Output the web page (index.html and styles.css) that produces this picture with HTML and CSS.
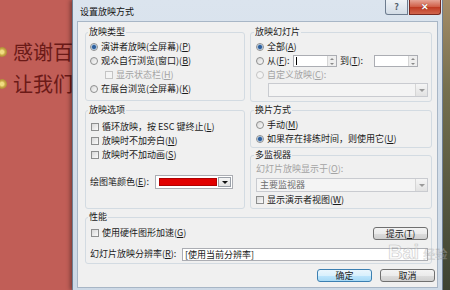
FILE: index.html
```html
<!DOCTYPE html>
<html lang="zh-CN">
<head>
  <meta charset="UTF-8">
  <meta name="viewport" content="width=device-width, initial-scale=1.0">
  <title>设置放映方式</title>
  <link rel="stylesheet" href="styles.css">
</head>
<body>
  <div class="desktop">
    <div class="slide">
      <p class="bullet-line"><span class="bullet"></span>感谢百</p>
      <p class="bullet-line"><span class="bullet"></span>让我们</p>
    </div>

    <div class="window">
      <div class="titlebar">
        <span class="title">设置放映方式</span>
        <div class="caption-buttons">
          <span class="cap-btn help">?</span>
          <span class="cap-btn close">✕</span>
        </div>
      </div>

      <div class="client">
        <div class="columns">
          <div class="col">
            <fieldset class="group">
              <legend>放映类型</legend>
              <label class="row"><input type="radio" name="type" checked>演讲者放映(全屏幕)(<u>P</u>)</label>
              <label class="row"><input type="radio" name="type">观众自行浏览(窗口)(<u>B</u>)</label>
              <label class="row disabled indent"><input type="checkbox" disabled>显示状态栏(<u>H</u>)</label>
              <label class="row"><input type="radio" name="type">在展台浏览(全屏幕)(<u>K</u>)</label>
            </fieldset>

            <fieldset class="group grow options">
              <legend>放映选项</legend>
              <label class="row"><input type="checkbox">循环放映，按 ESC 键终止(<u>L</u>)</label>
              <label class="row"><input type="checkbox">放映时不加旁白(<u>N</u>)</label>
              <label class="row"><input type="checkbox">放映时不加动画(<u>S</u>)</label>
              <div class="row pen-row">
                <span class="pen-label">绘图笔颜色(<u>E</u>):</span>
                <div class="combo color-combo">
                  <span class="swatch"></span>
                  <span class="combo-arrow dark"><span class="tri"></span></span>
                </div>
              </div>
            </fieldset>
          </div>

          <div class="col">
            <fieldset class="group right">
              <legend>放映幻灯片</legend>
              <label class="row"><input type="radio" name="range" checked>全部(<u>A</u>)</label>
              <div class="row">
                <label class="from-label"><input type="radio" name="range">从(<u>F</u>):</label>
                <div class="spin">
                  <span class="spin-text"><span class="caret"></span></span>
                  <span class="spin-btns"><span class="up"></span><span class="down"></span></span>
                </div>
                <span class="to-label">到(<u>T</u>):</span>
                <div class="spin">
                  <span class="spin-text"></span>
                  <span class="spin-btns"><span class="up"></span><span class="down"></span></span>
                </div>
              </div>
              <label class="row disabled"><input type="radio" name="range" disabled>自定义放映(<u>C</u>):</label>
              <div class="combo disabled-combo custom-combo">
                <span class="combo-text"></span>
                <span class="combo-arrow"><span class="tri"></span></span>
              </div>
            </fieldset>

            <fieldset class="group right advance">
              <legend>换片方式</legend>
              <label class="row"><input type="radio" name="advance">手动(<u>M</u>)</label>
              <label class="row"><input type="radio" name="advance" checked>如果存在排练时间，则使用它(<u>U</u>)</label>
            </fieldset>

            <fieldset class="group right grow monitors">
              <legend>多监视器</legend>
              <div class="line disabled">幻灯片放映显示于(<u>O</u>):</div>
              <div class="combo disabled-combo monitor-combo">
                <span class="combo-text">主要监视器</span>
                <span class="combo-arrow"><span class="tri"></span></span>
              </div>
              <label class="row presenter"><input type="checkbox">显示演示者视图(<u>W</u>)</label>
            </fieldset>
          </div>
        </div>

        <fieldset class="group perf">
          <legend>性能</legend>
          <div class="row perf-row">
            <label class="row"><input type="checkbox">使用硬件图形加速(<u>G</u>)</label>
            <button class="btn">提示(<u>T</u>)</button>
          </div>
          <div class="row res-row">
            <span class="res-label">幻灯片放映分辨率(<u>R</u>):</span>
            <input class="text-input" type="text" value="[使用当前分辨率]">
          </div>
        </fieldset>

        <div class="actions">
          <button class="btn default">确定</button>
          <button class="btn">取消</button>
        </div>
      </div>
    </div>

    <div class="backdrop"></div>

    <!-- site watermark lying over the screenshot -->
    <div class="watermark"><span class="wm-word">Bai</span><span class="wm-cn">经验</span></div>
  </div>
</body>
</html>
```

FILE: styles.css
```css
* {
  box-sizing: border-box;
}

body {
  margin: 0;
  width: 450px;
  height: 290px;
  overflow: hidden;
  font-family: "Noto Sans CJK SC", "Noto Sans", sans-serif;
  font-size: 9px;
  line-height: 12px;
  color: #1a1a1a;
}

.desktop {
  position: relative;
  display: flex;
  height: 290px;
}

/* slide behind the dialog */
.slide {
  width: 72px;
  flex: none;
  background: #c15e57;
  padding-top: 40px;
  overflow: hidden;
}

.bullet-line {
  display: flex;
  align-items: center;
  height: 24px;
  margin: 0 0 8px;
  font-size: 20px;
  line-height: 24px;
  color: #6b1a17;
  white-space: nowrap;
}

.bullet {
  width: 10px;
  height: 10px;
  margin: 0 6px 0 -3px;
  border-radius: 50%;
  background: radial-gradient(circle, #f0dc80 0 25%, #c9a845 45%, #8e6a2a 100%);
  flex: none;
}

/* dialog window */
.window {
  width: 371px;
  flex: none;
  display: flex;
  flex-direction: column;
  padding: 0 4px 2px;
  background: linear-gradient(#dbe4ee, #cdd9e6);
  border-left: 1px solid #6f7f93;
  border-right: 1px solid #6f7f93;
  box-shadow: -2px 0 4px rgba(0, 0, 0, 0.35);
}

.titlebar {
  height: 21px;
  display: flex;
  justify-content: space-between;
  align-items: flex-start;
  flex: none;
}

.title {
  padding: 6px 0 0 3px;
  color: #111;
}

.caption-buttons {
  display: flex;
  gap: 1px;
  margin-right: -3px;
}

.cap-btn {
  height: 15px;
  border: 1px solid #6d7c8f;
  border-top: none;
  text-align: center;
  font-size: 9px;
  line-height: 14px;
}

.help {
  width: 23px;
  border-radius: 0 0 0 3px;
  background: linear-gradient(#eef2f6, #d3dce6);
  color: #55606c;
  font-weight: bold;
}

.close {
  width: 32px;
  border-color: #7a2a20;
  border-radius: 0 0 3px 0;
  background: linear-gradient(#e6a597, #cf5c45 50%, #bf3a22 51%, #d0654d);
  color: #fff;
  font-weight: bold;
  text-shadow: 0 0 1px #5a1208;
}

.client {
  flex: 1;
  background: #f0f0f0;
  border: 1px solid #a8b6c6;
  padding: 4px 5px 0 7px;
}

.columns {
  display: grid;
  grid-template-columns: 160px 182px;
  column-gap: 5px;
}

.col {
  display: flex;
  flex-direction: column;
}

.group {
  margin: 0;
  min-width: 0;
  border: 1px solid #d3dbe2;
  border-radius: 3px;
  padding: 2px 3px 4px 4px;
}

.group legend {
  padding: 0 1px;
  margin-left: -2px;
  line-height: 12px;
  color: #1a1a1a;
}

.grow {
  flex: 1;
}

.options {
  margin-top: 3px;
  padding-top: 4px;
}

.right {
  padding-left: 5px;
}

.advance {
  margin-top: 2px;
  padding-bottom: 1px;
}

.monitors {
  margin-top: 1px;
  padding-bottom: 1px;
}

.row {
  display: flex;
  align-items: center;
  height: 14px;
  white-space: nowrap;
}

.line {
  height: 12px;
  white-space: nowrap;
}

.indent {
  padding-left: 15px;
}

.disabled {
  color: #a3a3a3;
}

input[type="radio"],
input[type="checkbox"] {
  appearance: none;
  -webkit-appearance: none;
  flex: none;
  width: 8px;
  height: 8px;
  margin: 0 3px 0 0;
  border: 1px solid #8e8f8f;
  background: linear-gradient(135deg, #d8d8d8, #fbfbfb);
}

input[type="radio"] {
  border-radius: 50%;
}

input[type="radio"]:checked {
  background: radial-gradient(circle, #2c5d9a 0 1.5px, #86abd6 2.3px, #e8eef5 3px);
}

input:disabled {
  border-color: #c4c4c4;
  background: #f4f4f4;
}

.options input[type="checkbox"],
.perf input[type="checkbox"] {
  margin-left: 1px;
}

.pen-row {
  margin-top: 13px;
}

.pen-label {
  width: 65px;
}

/* combo boxes */
.combo {
  display: flex;
  height: 14px;
  border: 1px solid #abadb3;
  background: #fff;
}

.combo-text {
  flex: 1;
  padding-left: 3px;
  line-height: 12px;
}

.combo-arrow {
  width: 12px;
  display: flex;
  align-items: center;
  justify-content: center;
  border-left: 1px solid #d6d6d6;
  background: linear-gradient(#f5f5f5, #e2e2e2);
}

.tri {
  width: 0;
  height: 0;
  border-top: 3px solid #9a9a9a;
  border-left: 3px solid transparent;
  border-right: 3px solid transparent;
}

.combo-arrow.dark {
  width: 13px;
  border: 1px solid #9aa0a8;
}

.combo-arrow.dark .tri {
  border-top-color: #111;
}

.color-combo {
  width: 78px;
  padding: 1px;
}

.swatch {
  flex: 1;
  margin: 1px 1px 1px 2px;
  background: #e10000;
  border: 1px solid #b00000;
}

.disabled-combo {
  background: #f4f4f4;
  border-color: #c9cbd0;
  color: #6e6e6e;
}

.custom-combo {
  margin: 1px 0 0 12px;
}

.monitor-combo {
  margin: 3px 0 1px;
}

/* spin boxes */
.from-label {
  display: flex;
  align-items: center;
  width: 37px;
}

.spin {
  display: flex;
  width: 44px;
  height: 12px;
  border: 1px solid #abadb3;
  background: #fff;
}

.spin-text {
  flex: 1;
  display: flex;
  align-items: center;
  padding-left: 2px;
}

.caret {
  width: 1px;
  height: 8px;
  background: #000;
}

.spin-btns {
  width: 9px;
  display: flex;
  flex-direction: column;
  border-left: 1px solid #d6d6d6;
  background: #eeeeee;
}

.spin-btns span {
  flex: 1;
  display: flex;
  align-items: center;
  justify-content: center;
}

.spin-btns .up::after {
  content: "";
  border-bottom: 2px solid #8a8a8a;
  border-left: 2px solid transparent;
  border-right: 2px solid transparent;
}

.spin-btns .down::after {
  content: "";
  border-top: 2px solid #8a8a8a;
  border-left: 2px solid transparent;
  border-right: 2px solid transparent;
}

.to-label {
  width: 34px;
  margin-left: 3px;
}

/* performance */
.perf {
  margin-top: 2px;
  padding: 3px 3px 2px 4px;
}

.perf-row {
  justify-content: space-between;
}

.res-row {
  margin-top: 7px;
}

.res-label {
  width: 92px;
}

.text-input {
  flex: 1;
  height: 13px;
  padding: 0 2px;
  border: 1px solid #abadb3;
  background: #fff;
  font: inherit;
  color: #1a1a1a;
}

/* buttons */
.btn {
  width: 55px;
  height: 13px;
  padding: 0;
  border: 1px solid #707070;
  border-radius: 3px;
  background: linear-gradient(#f3f3f3 0, #ebebeb 50%, #dddddd 51%, #cfcfcf 100%);
  font: inherit;
  line-height: 11px;
  color: #1a1a1a;
}

.btn.default {
  border-color: #3c7fb1;
  background: linear-gradient(#eaf6fd 0, #d9f0fc 50%, #bee6fd 51%, #a7d9f5 100%);
}

.actions {
  display: flex;
  justify-content: flex-end;
  gap: 8px;
  margin: 5px -3px 0 0;
}

.backdrop {
  flex: 1;
  background: linear-gradient(#a58c68 0, #76704f 30%, #3c4231 100%);
}

.watermark {
  position: absolute;
  left: 388px;
  top: 242px;
  display: flex;
  align-items: baseline;
  gap: 4px;
  opacity: 0.45;
  pointer-events: none;
}

.wm-word {
  font-family: "Liberation Sans", sans-serif;
  font-size: 20px;
  line-height: 20px;
  font-weight: bold;
  color: #f4f4f4;
  -webkit-text-stroke: 0.6px #8a8a8a;
}

.wm-cn {
  font-size: 12px;
  line-height: 14px;
  color: #f4f4f4;
  -webkit-text-stroke: 0.4px #8a8a8a;
}
```
